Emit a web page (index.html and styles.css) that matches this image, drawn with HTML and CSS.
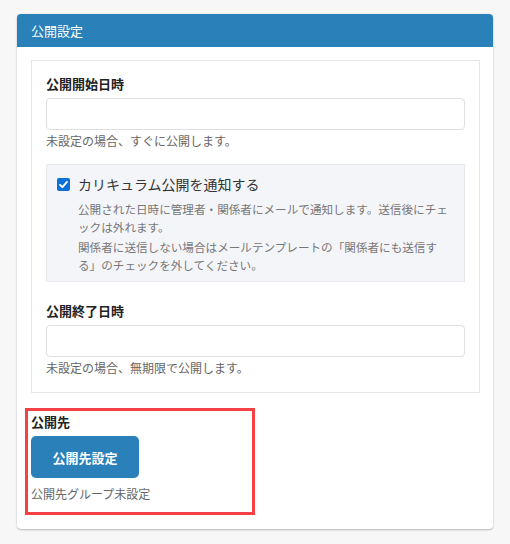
FILE: index.html
```html
<!DOCTYPE html>
<html lang="ja">
<head>
<meta charset="utf-8">
<link rel="stylesheet" href="styles.css">
</head>
<body>
<div class="card">
  <div class="card-header">公開設定</div>
  <div class="card-body">
    <div class="panel">
      <div class="field">
        <div class="label">公開開始日時</div>
        <div class="input"></div>
        <div class="help">未設定の場合、すぐに公開します。</div>
      </div>
      <div class="notice">
        <label class="check-row">
          <span class="checkbox"><svg viewBox="0 0 13 13" width="13" height="13"><rect x="0" y="0" width="13" height="13" rx="2" fill="#0b70d8"/><path d="M3 6.8 L5.4 9.2 L10 3.9" fill="none" stroke="#fff" stroke-width="1.9" stroke-linecap="round" stroke-linejoin="round"/></svg></span>
          <span class="check-label">カリキュラム公開を通知する</span>
        </label>
        <p class="desc">公開された日時に管理者・関係者にメールで通知します。送信後にチェックは外れます。</p>
        <p class="desc desc-2">関係者に送信しない場合はメールテンプレートの「関係者にも送信する」のチェックを外してください。</p>
      </div>
      <div class="field">
        <div class="label">公開終了日時</div>
        <div class="input"></div>
        <div class="help">未設定の場合、無期限で公開します。</div>
      </div>
    </div>
    <div class="target">
      <div class="label">公開先</div>
      <button class="btn">公開先設定</button>
      <div class="help">公開先グループ未設定</div>
    </div>
  </div>
</div>
</body>
</html>
```
FILE: styles.css
```css
* { box-sizing: border-box; }
html, body { margin: 0; padding: 0; }
body {
  background: #f7f7f7;
  font-family: "Noto Sans CJK JP", "Noto Sans", sans-serif;
  color: #333;
  width: 510px;
  height: 544px;
  overflow: hidden;
}
.card {
  margin: 14px 0 0 17px;
  width: 476px;
  background: #fff;
  border-radius: 4px;
  box-shadow: 0 1px 2px rgba(0,0,0,0.25), 0 0 1px rgba(0,0,0,0.12);
}
.card-header {
  height: 33px;
  background: #2a80b9;
  color: #fff;
  font-size: 13px;
  line-height: 33px;
  padding-left: 14px;
  border-radius: 4px 4px 0 0;
}
.card-body {
  padding: 13px 13px 14px 14px;
}
.panel {
  border: 1px solid #e6e6e6;
  padding: 14px 14px 15px 14px;
}
.label {
  font-size: 13px;
  font-weight: bold;
  line-height: 18px;
  color: #222;
}
.field .label { margin-bottom: 5px; }
.input {
  height: 32px;
  border: 1px solid #dfdfdf;
  border-radius: 4px;
  background: #fff;
}
.help {
  font-size: 12px;
  line-height: 18px;
  color: #666;
  margin-top: 2px;
}
.notice {
  margin: 14px 0 20px;
  background: #f4f5f9;
  border: 1px solid #e8e9ee;
  padding: 9px 12px 7px 10px;
}
.check-row {
  display: flex;
  align-items: center;
  gap: 8px;
  height: 20px;
}
.checkbox { display: flex; width: 13px; height: 13px; }
.check-label {
  font-size: 14px;
  color: #333;
  line-height: 20px;
}
.desc {
  margin: 6px 0 0 21px;
  font-size: 11.6px;
  line-height: 18px;
  color: #777;
  line-break: loose;
}
.desc-2 { margin-top: 2px; }
.target {
  margin: 15px 0 0 -6px;
  width: 230px;
  border: 3px solid #f34144;
  padding: 2px 3px 9px 3px;
}
.btn {
  display: block;
  margin-top: 5px;
  width: 108px;
  height: 42px;
  border: none;
  border-radius: 5px;
  background: #2a80b9;
  color: #fff;
  font-family: inherit;
  font-size: 13px;
  font-weight: bold;
}
.target .help { margin-top: 7px; }
```
